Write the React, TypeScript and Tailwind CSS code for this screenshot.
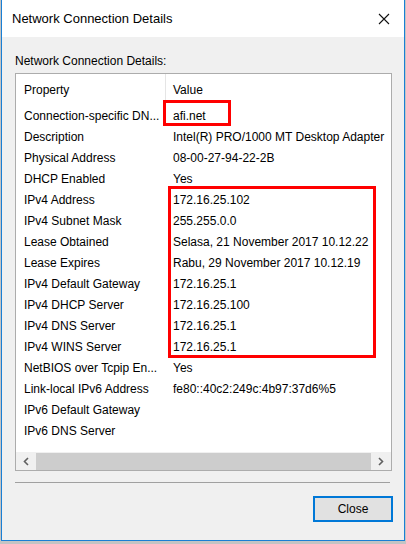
import React from "react";

const rows: [string, string][] = [
  ["Connection-specific DN...", "afi.net"],
  ["Description", "Intel(R) PRO/1000 MT Desktop Adapter"],
  ["Physical Address", "08-00-27-94-22-2B"],
  ["DHCP Enabled", "Yes"],
  ["IPv4 Address", "172.16.25.102"],
  ["IPv4 Subnet Mask", "255.255.0.0"],
  ["Lease Obtained", "Selasa, 21 November 2017 10.12.22"],
  ["Lease Expires", "Rabu, 29 November 2017 10.12.19"],
  ["IPv4 Default Gateway", "172.16.25.1"],
  ["IPv4 DHCP Server", "172.16.25.100"],
  ["IPv4 DNS Server", "172.16.25.1"],
  ["IPv4 WINS Server", "172.16.25.1"],
  ["NetBIOS over Tcpip En...", "Yes"],
  ["Link-local IPv6 Address", "fe80::40c2:249c:4b97:37d6%5"],
  ["IPv6 Default Gateway", ""],
  ["IPv6 DNS Server", ""],
];

export default function App() {
  return (
    <div
      className="relative w-[406px] h-[544px] bg-[#c4c4c4] overflow-hidden pl-[1px]"
      style={{ fontFamily: '"Liberation Sans", Arial, sans-serif' }}
    >
      <div className="w-[404px] h-[541px] border border-t-0 border-[#1a7fd4] bg-[#f0f0f0] flex flex-col">
        {/* title bar */}
        <div className="h-[37px] bg-white flex items-center justify-between pl-[10px] pr-[14px] shrink-0">
          <span className="text-[13px] text-black">Network Connection Details</span>
          <svg width="12" height="12" viewBox="0 0 12 12">
            <path d="M1 1 L11 11 M11 1 L1 11" stroke="#111" strokeWidth="1.1" />
          </svg>
        </div>
        {/* body */}
        <div className="flex flex-col pl-[13px] pr-[11px]">
          <div className="mt-[17px] h-[15px] leading-[15px] text-[12px] text-black">
            Network Connection Details:
          </div>
          <div className="mt-[4px] w-[377px] h-[398px] border border-[#acacac] bg-white flex flex-col text-[12px] text-black">
            <div className="h-[31px] flex shrink-0">
              <div className="w-[150px] pl-[8px] flex items-center border-r border-[#e5e5e5]">Property</div>
              <div className="pl-[7px] flex items-center">Value</div>
            </div>
            <div className="flex flex-col">
              {rows.map(([k, v]) => (
                <div key={k} className="h-[21px] flex items-center whitespace-nowrap">
                  <div className="w-[150px] pl-[8px] shrink-0 overflow-hidden">{k}</div>
                  <div className="pl-[7px]">{v}</div>
                </div>
              ))}
            </div>
            <div className="flex-1" />
            <div className="h-[18px] flex items-center bg-[#f0f0f0] shrink-0">
              <div className="w-[20px] flex items-center justify-center">
                <svg width="6" height="9" viewBox="0 0 6 9">
                  <path d="M5 1 L1.5 4.5 L5 8" stroke="#606060" strokeWidth="1.6" fill="none" />
                </svg>
              </div>
              <div className="flex-1 h-[17px] bg-[#cdcdcd]" />
              <div className="w-[20px] flex items-center justify-center">
                <svg width="6" height="9" viewBox="0 0 6 9">
                  <path d="M1 1 L4.5 4.5 L1 8" stroke="#606060" strokeWidth="1.6" fill="none" />
                </svg>
              </div>
            </div>
          </div>
          <div className="mt-[11px] mr-[3px] h-px bg-[#a0a0a0]" />
          <div className="mt-[13px] flex justify-end">
            <button className="w-[80px] h-[26px] border-2 border-[#0078d7] bg-[#e1e1e1] text-[12px] text-black flex items-center justify-center">
              Close
            </button>
          </div>
        </div>
      </div>
      {/* red highlight boxes */}
      <div className="absolute left-[163px] top-[100px] w-[68px] h-[26px] border-[3px] border-[#ff0000]" />
      <div className="absolute left-[168px] top-[186px] w-[208px] h-[172px] border-[3px] border-[#ff0000]" />
    </div>
  );
}
